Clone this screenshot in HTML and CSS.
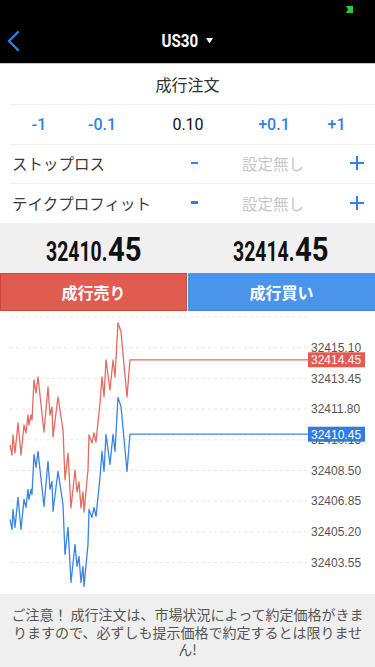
FILE: index.html
```html
<!DOCTYPE html>
<html lang="ja">
<head>
<meta charset="utf-8">
<title>成行注文</title>
<link rel="stylesheet" href="styles.css">
</head>
<body>
<div class="screen">
  <div class="status">
    <svg class="battery" width="8" height="8" viewBox="0 0 8 8"><polygon points="0,0 7,0 7,7 0,7 2,3.5" fill="#27c93f"/></svg>
  </div>
  <div class="nav">
    <svg class="back" width="16" height="22" viewBox="0 0 16 22"><polyline points="11,2 2,11 11,20" fill="none" stroke="#2f80ed" stroke-width="2.4" stroke-linecap="round" stroke-linejoin="round"/></svg>
    <div class="nav-title"><span class="sym">US30</span><svg class="caret" width="7" height="6" viewBox="0 0 7 6"><polygon points="0,0 7,0 3.5,5.5" fill="#fff"/></svg></div>
    <div></div>
  </div>

  <div class="title-row">成行注文</div>
  <div class="sep"></div>
  <div class="lot-row">
    <span class="step">-1</span>
    <span class="step">-0.1</span>
    <span class="lot">0.10</span>
    <span class="step">+0.1</span>
    <span class="step">+1</span>
  </div>
  <div class="sep"></div>
  <div class="opt-row">
    <span class="opt-label">ストップロス</span>
    <span class="minus"></span>
    <span class="opt-value">設定無し</span>
    <svg class="plus" width="14" height="14" viewBox="0 0 14 14"><path d="M7 0V14M0 7H14" stroke="#2f80ed" stroke-width="2"/></svg>
  </div>
  <div class="sep"></div>
  <div class="opt-row tp">
    <span class="opt-label">テイクプロフィット</span>
    <span class="minus"></span>
    <span class="opt-value">設定無し</span>
    <svg class="plus" width="14" height="14" viewBox="0 0 14 14"><path d="M7 0V14M0 7H14" stroke="#2f80ed" stroke-width="2"/></svg>
  </div>

  <div class="prices">
    <div class="price"><span class="p-small">32410.</span><span class="p-big">45</span></div>
    <div class="price"><span class="p-small">32414.</span><span class="p-big">45</span></div>
  </div>
  <div class="actions">
    <div class="btn sell">成行売り</div>
    <div class="btn buy">成行買い</div>
  </div>

  <div class="chart">
    <svg width="375" height="283" viewBox="0 311 375 283">
      <defs>
        <polyline id="series" fill="none" stroke-width="1.3" stroke-linejoin="round" points="10,445 12,455 13,435 15,453 18,423 21,455 24,425 26,433 28,415 29,425 31,415 32,420 34,380 36,393 38,377 44,432 48,387 50,415 52,407 53,437 58,397 63,430 65,480 68,453 71,508 75,470 77,492 79,482 81,508 83,492 84,512 88,470 89,435 92,443 94,433 96,442 100,403 102,377 104,397 106,360 110,390 113,360 115,377 118,323 121,332 127,397 130,359.8 308,359.8"/>
      </defs>
      <g class="grid" stroke="#e6e6e6" stroke-width="1" stroke-dasharray="3 3">
        <line x1="10" x2="308" y1="317" y2="317"/>
        <line x1="10" x2="308" y1="347.7" y2="347.7"/>
        <line x1="10" x2="308" y1="378.4" y2="378.4"/>
        <line x1="10" x2="308" y1="409.1" y2="409.1"/>
        <line x1="10" x2="308" y1="439.8" y2="439.8"/>
        <line x1="10" x2="308" y1="470.5" y2="470.5"/>
        <line x1="10" x2="308" y1="501.2" y2="501.2"/>
        <line x1="10" x2="308" y1="531.9" y2="531.9"/>
        <line x1="10" x2="308" y1="562.6" y2="562.6"/>
      </g>
      <g class="axis">
        <text x="311" y="351.6">32415.10</text>
        <text x="311" y="382.6">32413.45</text>
        <text x="311" y="413.3">32411.80</text>
        <text x="311" y="444">32410.15</text>
        <text x="311" y="474.7">32408.50</text>
        <text x="311" y="505.4">32406.85</text>
        <text x="311" y="536.1">32405.20</text>
        <text x="311" y="566.8">32403.55</text>
      </g>
      <use href="#series" stroke="#e46a5f"/>
      <use href="#series" stroke="#3a84e8" transform="translate(0,74.4)"/>
      <rect x="308" y="352.3" width="57" height="15" fill="#e05b50"/>
      <text class="tag" x="311" y="364.2">32414.45</text>
      <rect x="308" y="426.7" width="57" height="15" fill="#2f7de1"/>
      <text class="tag" x="311" y="438.6">32410.45</text>
    </svg>
  </div>

  <div class="notice">ご注意！ 成行注文は、市場状況によって約定価格がきまりますので、必ずしも提示価格で約定するとは限りません!</div>
</div>
</body>
</html>
```

FILE: styles.css
```css
* { box-sizing: border-box; }
html, body { margin: 0; padding: 0; background: #fff; }
body {
  font-family: "Liberation Sans", "Noto Sans CJK JP", sans-serif;
  color: #333;
}
.screen { width: 375px; height: 667px; overflow: hidden; }

.status {
  height: 20px;
  background: #000;
  display: flex;
  justify-content: flex-end;
  align-items: flex-start;
  padding: 6px 21px 0 0;
}
.battery { display: block; }

.nav {
  height: 44px;
  background: #000;
  border-bottom: 1px solid #c9c9c9;
  display: grid;
  grid-template-columns: 44px 1fr 44px;
  align-items: center;
}
.back { display: block; margin-left: 7px; margin-top: -2px; }
.nav-title {
  display: flex;
  align-items: center;
  justify-content: center;
  margin-left: -1px;
  margin-top: -3px;
  gap: 8px;
}
.sym {
  font-family: Roboto, "Liberation Sans", sans-serif;
  font-weight: 700;
  font-size: 18px;
  color: #fff;
  display: inline-block;
  transform: scaleX(0.84);
  margin: 0 -3px;
}
.caret { display: block; margin-top: 2px; }

.title-row {
  height: 40px;
  display: flex;
  align-items: center;
  justify-content: center;
  font-size: 16px;
  color: #333;
  font-family: "Noto Sans CJK JP", sans-serif;
}
.sep { height: 1px; margin-left: 10px; background: #f0f0f0; }

.lot-row {
  height: 39px;
  display: grid;
  grid-template-columns: 78px 48px 124px 48px 77px;
  align-items: center;
  justify-items: center;
  font-family: Roboto, "Liberation Sans", sans-serif;
  font-size: 16px;
}
.step { color: #2f80ed; font-weight: 500; }
.lot { color: #111; }

.opt-row {
  height: 38px;
  display: grid;
  grid-template-columns: 175px 37px 122px 1fr;
  align-items: center;
  font-family: "Noto Sans CJK JP", sans-serif;
  font-size: 15.5px;
  padding-bottom: 2px;
}
.opt-row.tp { height: 39px; }
.opt-label { padding-left: 12px; color: #3a3a3a; white-space: nowrap; }
.minus {
  justify-self: center;
  width: 7px;
  height: 2.5px;
  background: #2f80ed;
  margin-left: 1px;
}
.opt-value { text-align: center; color: #c6c6c6; }
.plus { justify-self: end; margin-right: 11px; display: block; }

.prices {
  height: 50px;
  background: #f0f0f0;
  display: grid;
  grid-template-columns: 1fr 1fr;
  align-items: center;
}
.price {
  display: flex;
  justify-content: center;
  align-items: baseline;
  font-family: Roboto, "Liberation Sans", sans-serif;
  font-weight: 700;
  color: #111;
  line-height: 1;
  padding-top: 2px;
}
.p-small {
  font-size: 27px;
  display: inline-block;
  transform: scaleX(0.72);
  transform-origin: left;
  margin-right: -23px;
}
.p-big {
  font-size: 34px;
  display: inline-block;
  transform: scaleX(0.86);
  transform-origin: left;
  margin-right: -5px;
}

.actions {
  height: 38px;
  display: grid;
  grid-template-columns: 187px 1fr;
  gap: 1px;
  background: #fff;
}
.btn {
  display: flex;
  align-items: center;
  justify-content: center;
  color: #fff;
  font-family: "Noto Sans CJK JP", sans-serif;
  font-weight: 700;
  font-size: 16px;
}
.sell { background: #e05b50; border: 1px solid #d3453b; }
.buy { background: #4a94ec; border-bottom: 1px solid #3f86e0; }

.chart { height: 283px; background: #fff; }
.chart svg { display: block; }
.axis text {
  font-family: "Liberation Sans", sans-serif;
  font-size: 12px;
  fill: #555;
}
.tag {
  font-family: "Liberation Sans", sans-serif;
  font-size: 12px;
  fill: #fff;
}

.notice {
  height: 73px;
  background: #efefef;
  padding: 12px 8px 0;
  text-align: center;
  font-family: "Noto Sans CJK JP", sans-serif;
  font-size: 14px;
  line-height: 17.5px;
  color: #555;
}
```
